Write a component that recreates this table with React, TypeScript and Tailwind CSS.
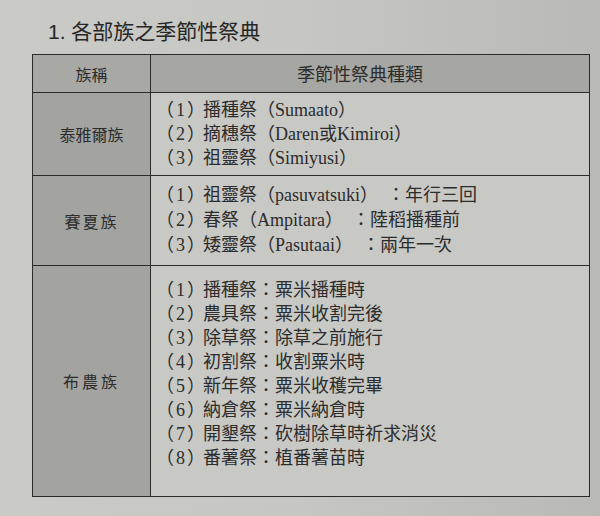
const tribes = [
  {
    name: "泰雅爾族",
    label: "tracking-normal",
    body: "py-[5px] leading-[24px]",
    items: [
      ["播種祭（", "Sumaato", "）"],
      ["摘穗祭（", "Daren或Kimiroi", "）"],
      ["祖靈祭（", "Simiyusi", "）"],
    ],
  },
  {
    name: "賽夏族",
    label: "tracking-[2px]",
    body: "py-[7px] leading-[25px]",
    items: [
      ["祖靈祭（", "pasuvatsuki", "）\u2002：年行三回"],
      ["春祭（", "Ampitara", "）\u2002：陸稻播種前"],
      ["矮靈祭（", "Pasutaai", "）\u2002：兩年一次"],
    ],
  },
  {
    name: "布農族",
    label: "tracking-[3px]",
    body: "pt-[12px] pb-[26px] leading-[24px]",
    items: [
      ["播種祭：粟米播種時", "", ""],
      ["農具祭：粟米收割完後", "", ""],
      ["除草祭：除草之前施行", "", ""],
      ["初割祭：收割粟米時", "", ""],
      ["新年祭：粟米收穫完畢", "", ""],
      ["納倉祭：粟米納倉時", "", ""],
      ["開墾祭：砍樹除草時祈求消災", "", ""],
      ["番薯祭：植番薯苗時", "", ""],
    ],
  },
];

export default function App() {
  return (
    <div className="w-[600px] h-[516px] overflow-hidden bg-gradient-to-r from-[#cacac6] via-[#c6c6c2] to-[#b9b9b5] text-[#2c2c2c] font-['Liberation_Serif','Noto_Sans_CJK_TC',serif]">
      {/* Title */}
      <div className="pl-[48px] pt-[19px] text-[21px] leading-[26px] text-[#262626] font-['Liberation_Sans','Noto_Sans_CJK_TC',sans-serif]">
        1. 各部族之季節性祭典
      </div>

      {/* Table */}
      <div className="mt-[9px] ml-[32px] w-[558px] border-[1.5px] border-[#2b2b2b] grid grid-cols-[118px_1fr] font-['Liberation_Serif','Noto_Sans_CJK_TC',serif]">
        <div className="h-[38px] flex items-center justify-center bg-[#a8a8a4] border-r-[1.5px] border-b-[1.5px] border-[#2b2b2b] text-[16px] font-['Noto_Sans_CJK_TC',sans-serif]">
          族稱
        </div>
        <div className="h-[38px] flex items-center pl-[146px] bg-[#a6a6a2] border-b-[1.5px] border-[#2b2b2b] text-[18px] font-['Noto_Sans_CJK_TC',sans-serif]">
          季節性祭典種類
        </div>

        {tribes.map((t, ti) => {
          const last = ti === tribes.length - 1;
          return (
            <div key={t.name} className="contents">
              <div
                className={`flex items-center justify-center bg-[#a3a3a0] border-r-[1.5px] border-[#2b2b2b] text-[16px] font-['Noto_Sans_CJK_TC',sans-serif] ${t.label} ${last ? "" : "border-b-[1.5px]"}`}
              >
                {t.name}
              </div>
              <div
                className={`pl-[14px] bg-[#c8c8c4] text-[18px] ${t.body} ${last ? "" : "border-b-[1.5px] border-[#2b2b2b]"}`}
              >
                {t.items.map((it, i) => (
                  <div key={i} className="whitespace-nowrap">
                    <span className="mr-[5px] tracking-[2px] [font-feature-settings:'halt']">（{i + 1}）</span>
                    {it[0]}
                    {it[1]}
                    {it[2]}
                  </div>
                ))}
              </div>
            </div>
          );
        })}
      </div>
    </div>
  );
}
